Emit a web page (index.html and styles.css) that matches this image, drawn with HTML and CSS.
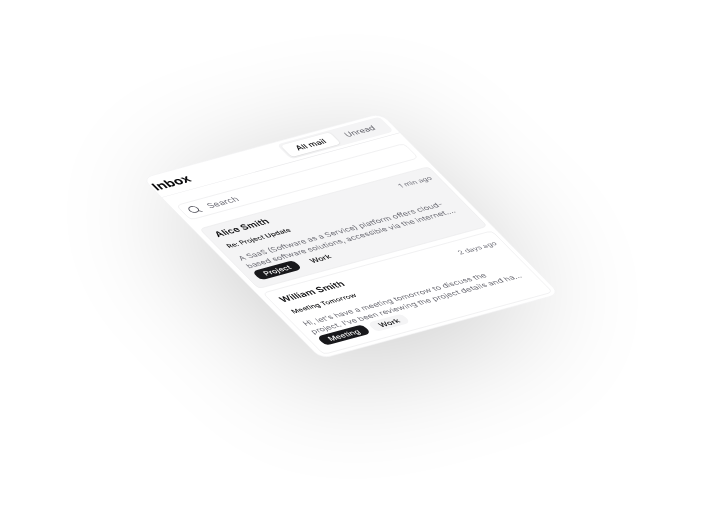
FILE: index.html
```html
<!DOCTYPE html>
<html lang="en">
<head>
    <meta charset="UTF-8">
    <title>Inbox</title>
    <link rel="stylesheet" href="styles.css">
</head>
<body>

<div class="stage">
    <div class="card">
        <div class="header">
            <h1>Inbox</h1>
            <div class="tabs">
                <div class="tab active">All mail</div>
                <div class="tab">Unread</div>
            </div>
        </div>

        <div class="search">
            <svg class="search-icon" viewBox="0 0 24 24" fill="none" stroke="currentColor" stroke-width="2" stroke-linecap="round" stroke-linejoin="round">
                <circle cx="11" cy="11" r="8"></circle>
                <path d="m21 21-4.3-4.3"></path>
            </svg>
            <span>Search</span>
        </div>

        <div class="mail selected">
            <div class="mail-top">
                <div class="name">Alice Smith</div>
                <div class="time">1 min ago</div>
            </div>
            <div class="subject">Re: Project Update</div>
            <div class="preview">A SaaS (Software as a Service) platform offers cloud-<br>based software solutions, accessible via the internet....</div>
            <div class="badges">
                <span class="badge dark">Project</span>
                <span class="badge">Work</span>
            </div>
        </div>

        <div class="mail">
            <div class="mail-top">
                <div class="name">William Smith</div>
                <div class="time">2 days ago</div>
            </div>
            <div class="subject">Meeting Tomorrow</div>
            <div class="preview">Hi, let's have a meeting tomorrow to discuss the<br>project. I've been reviewing the project details and ha...</div>
            <div class="badges">
                <span class="badge dark">Meeting</span>
                <span class="badge">Work</span>
            </div>
        </div>
    </div>
</div>

</body>
</html>
```

FILE: styles.css
```css
* { box-sizing: border-box; }
body { margin: 0; background: #fff; font-family: Inter, "Liberation Sans", sans-serif; color: #09090b; overflow: hidden; }
.stage { height: 509px; display: flex; align-items: center; justify-content: center; padding-bottom: 38px; filter: blur(0.4px); }
.card { width: 400px; height: 440px; flex: none; background: #fff; border: 1px solid #f0f0f1; border-radius: 16px; box-shadow: -25px 40px 200px rgba(0,0,0,0.2); transform: matrix(0.5975, -0.1625, 0.4068, 0.4114, 0, 0); }
.header { height: 47px; display: flex; align-items: center; justify-content: space-between; padding: 0 6px 0 2px; border-bottom: 1px solid #e9e9eb; }
h1 { margin: 0; font-size: 22px; font-weight: 700; }
.tabs { display: flex; width: 172px; padding: 4px; background: #f4f4f5; border-radius: 8px; }
.tab { flex: 1; height: 28px; line-height: 28px; text-align: center; font-size: 14px; font-weight: 400; color: #5f5f67; border-radius: 6px; }
.tab.active { background: #fff; color: #09090b; font-weight: 500; box-shadow: 0 1px 3px rgba(0,0,0,0.12); }
.search { height: 36px; margin: 22px 8px 21px; padding: 0 8px; display: flex; align-items: center; gap: 12px; border: 1px solid #e9e9eb; border-radius: 8px; font-size: 15px; color: #71717a; }
.search-icon { width: 20px; height: 20px; color: #52525b; }
.mail { height: 150px; margin: 0 6px 10px 8px; padding: 10px 10px 0 13px; border: 1px solid #e9e9eb; border-radius: 8px; }
.mail.selected { height: 146px; padding-top: 7px; background: #f4f4f5; }
.mail-top { display: flex; justify-content: space-between; align-items: flex-start; }
.name { font-size: 16px; line-height: 24px; font-weight: 600; }
.time { font-size: 12px; line-height: 16px; margin-top: 7px; color: #71717a; }
.subject { margin-top: 9px; font-size: 11.8px; line-height: 16px; font-weight: 500; margin-bottom: 12px; }
.preview { font-size: 13.4px; line-height: 19px; color: #6b6b73; margin-bottom: 2px; white-space: nowrap; }
.badges { display: flex; gap: 8px; }
.badge { padding: 3px 13px; font-size: 13px; line-height: 16px; font-weight: 500; border-radius: 9px; background: #f4f4f5; }
.badge.dark { background: #18181b; color: #fafafa; }
```
